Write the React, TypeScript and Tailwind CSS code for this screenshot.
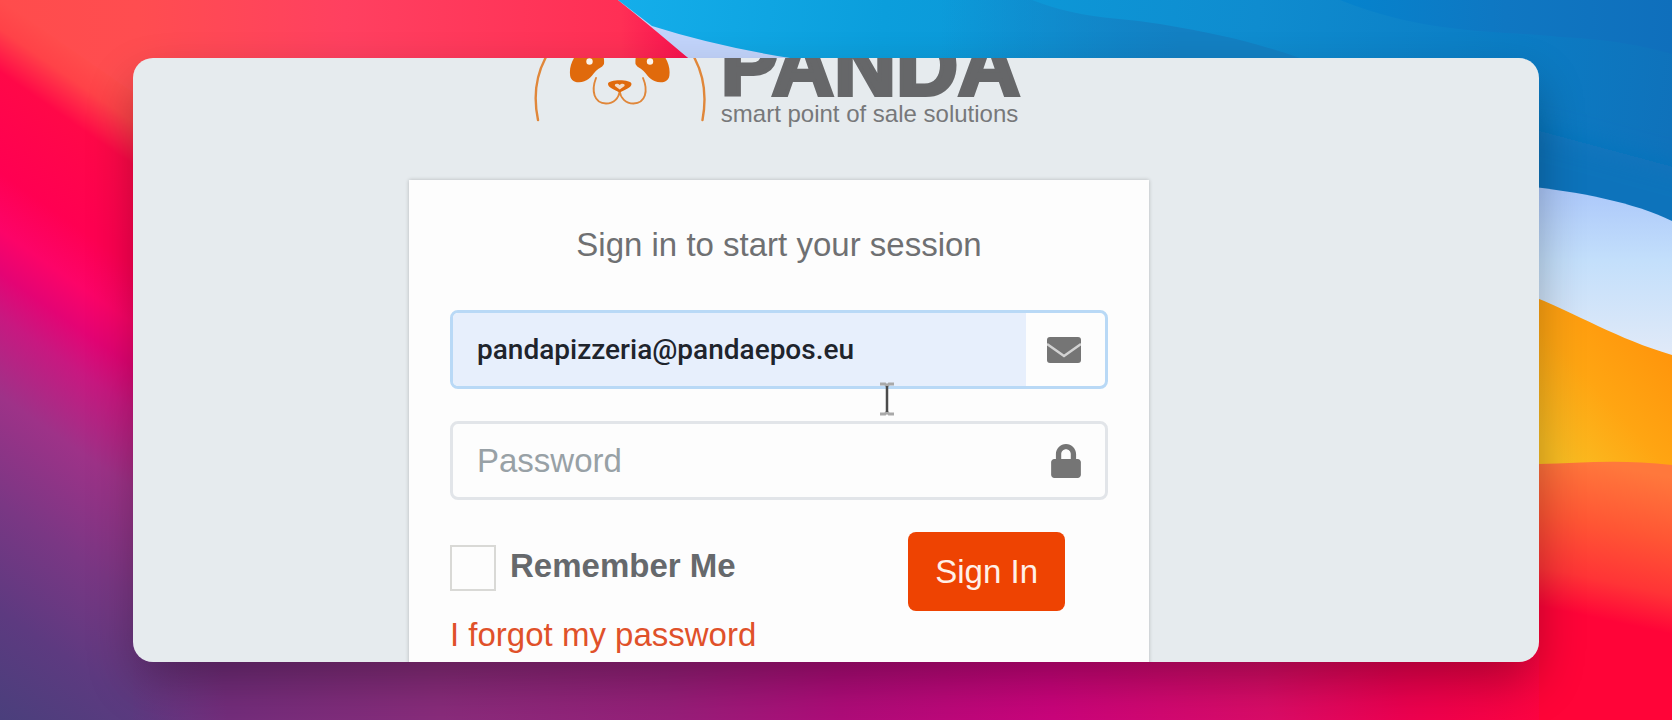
import React from "react";
import { FaLock } from "react-icons/fa";

function Wallpaper() {
  return (
    <svg
      className="absolute inset-0 h-full w-full"
      viewBox="0 0 1672 720"
      preserveAspectRatio="none"
      aria-hidden="true"
    >
      <defs>
        <filter id="softer" x="-30%" y="-30%" width="160%" height="160%">
          <feGaussianBlur stdDeviation="12" />
        </filter>
        <linearGradient id="dusk" x1="0" y1="0" x2="-338" y2="483" gradientUnits="userSpaceOnUse">
          <stop offset="0" stopColor="#ff4c4c" />
          <stop offset="0.04" stopColor="#ff4248" />
          <stop offset="0.1" stopColor="#ff0848" />
          <stop offset="0.24" stopColor="#ff0052" />
          <stop offset="0.32" stopColor="#fc0468" />
          <stop offset="0.38" stopColor="#e40474" />
          <stop offset="0.44" stopColor="#c81880" />
          <stop offset="0.55" stopColor="#9e3288" />
          <stop offset="0.7" stopColor="#7a3784" />
          <stop offset="0.85" stopColor="#5d3a80" />
          <stop offset="1" stopColor="#4a3f7c" />
        </linearGradient>
        <linearGradient id="floor" x1="133" y1="760" x2="1540" y2="600" gradientUnits="userSpaceOnUse">
          <stop offset="0" stopColor="#6a3080" stopOpacity="0" />
          <stop offset="0.07" stopColor="#742d7c" />
          <stop offset="0.22" stopColor="#8a2c7c" />
          <stop offset="0.38" stopColor="#981f7a" />
          <stop offset="0.5" stopColor="#b00c7a" />
          <stop offset="0.65" stopColor="#cc047c" />
          <stop offset="0.8" stopColor="#dc0c68" />
          <stop offset="0.9" stopColor="#f00050" />
          <stop offset="1" stopColor="#ff0440" />
        </linearGradient>
        <linearGradient id="coral" x1="0" y1="0" x2="690" y2="0" gradientUnits="userSpaceOnUse">
          <stop offset="0" stopColor="#ff4c4c" />
          <stop offset="0.2" stopColor="#ff4d50" />
          <stop offset="0.5" stopColor="#ff4060" />
          <stop offset="0.9" stopColor="#ff2f55" />
          <stop offset="1" stopColor="#f8104e" />
        </linearGradient>
        <linearGradient id="blue" x1="620" y1="0" x2="1672" y2="120" gradientUnits="userSpaceOnUse">
          <stop offset="0" stopColor="#14aeea" />
          <stop offset="0.25" stopColor="#0b9edc" />
          <stop offset="0.6" stopColor="#0f8ccf" />
          <stop offset="0.85" stopColor="#0b7cc4" />
          <stop offset="1" stopColor="#0f72bb" />
        </linearGradient>
        <linearGradient id="wave" x1="940" y1="0" x2="1180" y2="0" gradientUnits="userSpaceOnUse">
          <stop offset="0" stopColor="#1380c3" stopOpacity="0" />
          <stop offset="1" stopColor="#1380c3" />
        </linearGradient>
        <linearGradient id="navy" x1="1340" y1="0" x2="1672" y2="0" gradientUnits="userSpaceOnUse">
          <stop offset="0" stopColor="#0583cd" />
          <stop offset="0.5" stopColor="#0f77c2" />
          <stop offset="1" stopColor="#0f6fbc" />
        </linearGradient>
        <linearGradient id="ice" x1="0" y1="187" x2="0" y2="350" gradientUnits="userSpaceOnUse">
          <stop offset="0" stopColor="#abc7fa" />
          <stop offset="0.45" stopColor="#c3dffb" />
          <stop offset="1" stopColor="#dfe9f8" />
        </linearGradient>
        <linearGradient id="amber" x1="1560" y1="460" x2="1672" y2="360" gradientUnits="userSpaceOnUse">
          <stop offset="0" stopColor="#fabd22" />
          <stop offset="0.5" stopColor="#ffa512" />
          <stop offset="1" stopColor="#ff960c" />
        </linearGradient>
        <linearGradient id="ember" x1="1600" y1="462" x2="1568" y2="612" gradientUnits="userSpaceOnUse">
          <stop offset="0" stopColor="#ff783c" />
          <stop offset="0.4" stopColor="#ff5634" />
          <stop offset="0.75" stopColor="#ff3436" />
          <stop offset="1" stopColor="#ff0438" />
        </linearGradient>
      </defs>

      <rect width="1672" height="720" fill="url(#dusk)" />
      <rect x="133" y="600" width="1407" height="120" fill="url(#floor)" />

      <path d="M560 -10 L610 0 Q640 22 688 58 L700 80 H1672 V-10 Z" fill="#c2d4fb" />
      <path d="M0 -10 H608 L618 0 Q648 24 688 58 L720 100 H144 L0 0 Z" fill="url(#coral)" />
      <path d="M618 0 L652 26 Q715 46 790 58 L1200 200 L1500 260 H1700 V-10 H608 Z" fill="url(#blue)" />
      <path
        d="M1032 0 C1085 20 1110 16 1160 24 C1220 34 1260 44 1300 58 V90 H900 V0 Z"
        fill="url(#wave)"
      />
      <path d="M1340 0 C1430 36 1500 30 1560 37 C1620 40 1650 48 1672 54 V0 Z" fill="url(#navy)" />
      <path d="M1500 120 L1760 190 V280 H1500 Z" fill="#0873bb" filter="url(#softer)" />

      <path d="M1500 184 C1560 188 1630 200 1672 221 V370 L1500 320 Z" fill="url(#ice)" />
      <path d="M1500 284 C1570 308 1610 337 1672 355 V480 H1500 Z" fill="url(#amber)" />
      <path d="M1539 464 C1580 463 1620 459 1672 465 V720 H1539 Z" fill="url(#ember)" />
    </svg>
  );
}

function PandaFace() {
  return (
    <svg
      className="h-[126px] w-[180px] shrink-0"
      viewBox="530 0 180 126"
      fill="none"
      aria-hidden="true"
    >
      <g stroke="#e0873a" strokeWidth="2.4" strokeLinecap="round">
        <path d="M538 120 C533 96 536 76 545.5 58 C560 28 590 14 620 14 C650 14 680 28 694.5 58 C704 76 707 96 702.5 120" />
        <path d="M596 78 C591 91 594 103 606 103.500 C614 103.500 619 98 619.600 91 C620.500 98 625.500 103.500 633.500 103.500 C645.500 103 648.500 91 643 78" strokeWidth="1.900" />
      </g>
      <g fill="#e06a0c">
        <path d="M570 74 C569 64 576 50 588 46 C598 43 605 52 604 64 C602 68 598 68 595 72 C591 77 587 82 579 82.300 C573 82.300 570 79 570 74 Z" />
        <path d="M669.500 74 C670.500 64 663.500 50 651.500 46 C641.500 43 634.500 52 635.500 64 C637.500 68 641.500 68 644.500 72 C648.500 77 652.500 82 660.500 82.300 C666.500 82.300 669.500 79 669.500 74 Z" />
        <path d="M608 84 C608 79 631.500 79 631.500 84 C631.500 87.500 625 89.500 619.700 92.500 C614.500 89.500 608 87.500 608 84 Z" />
      </g>
      <path d="M619.700 89.500 L615 86 C614 83.500 618 83 619.700 85 C621.500 83 625.500 83.500 624.500 86 Z" fill="#f3dcc8" />
      <circle cx="589.500" cy="61.500" r="3.200" fill="#fbf3ec" />
      <circle cx="650" cy="61.500" r="3.200" fill="#fbf3ec" />
    </svg>
  );
}

function Logo() {
  return (
    <div className="flex h-[122px] shrink-0 items-end justify-center gap-[11px] pr-2 pb-[54px]">
      <PandaFace />
      <div className="flex flex-col text-[#666769]">
        <span className="text-[86px] leading-[74px] font-bold [-webkit-text-stroke:4px_#666769]">
          PANDA
        </span>
        <span className="text-[24px] leading-[24px] whitespace-nowrap text-[#77787a]">
          smart point of sale solutions
        </span>
      </div>
    </div>
  );
}

function EnvelopeIcon() {
  return (
    <svg className="h-[26px] w-[34px]" viewBox="0 0 34 26" fill="none" aria-hidden="true">
      <rect width="34" height="26" rx="3" fill="#757575" />
      <path d="M0 7 L17 19 L34 7" stroke="#d2d2d2" strokeWidth="2.500" />
    </svg>
  );
}

function TextCursor() {
  return (
    <svg
      className="pointer-events-none absolute top-[72px] left-[429px] h-[34px] w-[16px]"
      viewBox="0 0 16 34"
      fill="none"
      aria-hidden="true"
    >
      <path d="M1 2 H6 L8 4 L10 2 H15 M1 32 H6 L8 30 L10 32 H15" stroke="#a9a9a9" strokeWidth="3" />
      <path d="M8 4 V30" stroke="#4b4b4b" strokeWidth="2.500" />
    </svg>
  );
}

export default function App() {
  return (
    <div className="relative flex h-screen flex-col overflow-hidden px-[133px] py-[58px] font-['Liberation_Sans',Arial,sans-serif] text-[33px] leading-[48px]">
      <Wallpaper />
      <main className="relative flex min-h-0 flex-1 flex-col items-center rounded-[20px] shadow-[0_22px_50px_-4px_rgba(0,0,0,0.32)]">
        <div className="flex min-h-0 w-full flex-1 flex-col items-center overflow-hidden rounded-[20px] bg-[#e6ebee] pr-[114px]">
          <Logo />
          <section className="w-full max-w-[740px] flex-1 bg-[#fdfdfd] p-[41px] shadow-[0_0_4px_rgba(0,0,0,0.22)]">
            <h1 className="mb-[41px] text-center text-[#6f7072]">Sign in to start your session</h1>
            <form className="relative" onSubmit={(e) => e.preventDefault()}>
              <div className="mb-8 flex h-[79px] overflow-hidden rounded-[8px] border-[3px] border-[#b9d9f6]">
                <input
                  type="email"
                  aria-label="Email"
                  defaultValue="pandapizzeria@pandaepos.eu"
                  className="min-w-0 flex-1 bg-[#e7effc] pl-6 font-['Roboto'] text-[28px] font-medium text-[#20242c] outline-none"
                />
                <span className="flex w-[79px] items-center justify-end pr-6">
                  <EnvelopeIcon />
                </span>
              </div>
              <div className="mb-8 flex h-[79px] overflow-hidden rounded-[8px] border-[3px] border-[#e2e5e9]">
                <input
                  type="password"
                  aria-label="Password"
                  placeholder="Password"
                  className="min-w-0 flex-1 pl-6 outline-none placeholder:text-[#98a1a6]"
                />
                <span className="flex w-[79px] items-center justify-end pr-6 text-[#757575]">
                  <FaLock className="h-[34px] w-[30px]" />
                </span>
              </div>
              <div className="flex items-start justify-between pr-[43px]">
                <div className="flex flex-col items-start gap-5 pt-[13px]">
                  <label className="flex h-[46px] items-start gap-[14px] leading-[42px] font-bold text-[#66696c]">
                    <input
                      type="checkbox"
                      className="size-[46px] appearance-none border-2 border-[#d9d9d6] bg-[#fdfdfd] checked:bg-[#ee4302]"
                    />
                    Remember Me
                  </label>
                  <a href="#forgot" className="text-[#e0512a]">
                    I forgot my password
                  </a>
                </div>
                <button
                  type="submit"
                  className="h-[79px] rounded-[8px] bg-[#ee4302] px-[27px] text-[#fff0e8]"
                >
                  Sign In
                </button>
              </div>
              <TextCursor />
            </form>
          </section>
        </div>
      </main>
    </div>
  );
}
